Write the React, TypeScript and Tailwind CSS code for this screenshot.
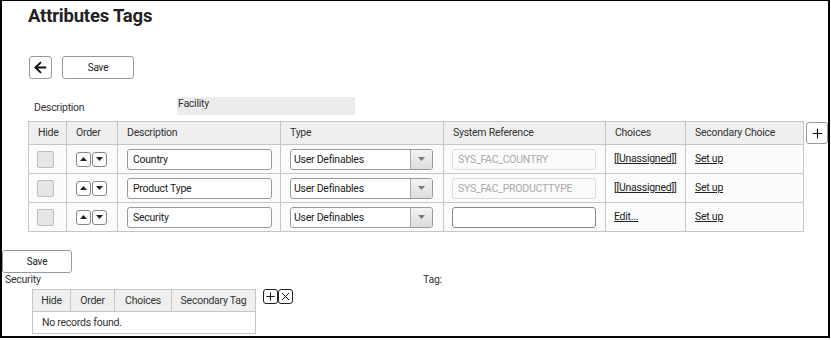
import { ArrowLeft, Plus, X } from 'lucide-react'

const rows = [
  { name: 'Country', ref: 'SYS_FAC_COUNTRY', choice: 'unassigned' },
  { name: 'Product Type', ref: 'SYS_FAC_PRODUCTTYPE', choice: 'unassigned' },
  { name: 'Security', ref: '', choice: 'edit' },
]

const headers = [
  { label: 'Hide', w: 'w-[38px]' },
  { label: 'Order', w: 'w-[51px]' },
  { label: 'Description', w: 'w-[163px]' },
  { label: 'Type', w: 'w-[163px]' },
  { label: 'System Reference', w: 'w-[162px]' },
  { label: 'Choices', w: 'w-[80px]' },
  { label: 'Secondary Choice', w: 'w-[118px]' },
]

const subHeaders = [
  { label: 'Hide', w: 'w-[38px]' },
  { label: 'Order', w: 'w-[44px]' },
  { label: 'Choices', w: 'w-[57px]' },
  { label: 'Secondary Tag', w: 'w-[84px]' },
]

const Caret = ({ up }: { up?: boolean }) => (
  <svg width="7" height="4" viewBox="0 0 7 4">
    <path d={up ? 'M0 4 L3.5 0 L7 4 Z' : 'M0 0 L7 0 L3.5 4 Z'} fill="#222" />
  </svg>
)

const App = () => {
  return (
    <div
      className="w-[830px] h-[338px] bg-white border-x-2 border-b-2 border-t border-black text-[#333] text-[10.5px] tracking-[-0.25px] overflow-hidden"
      style={{ fontFamily: 'Roboto, "Open Sans", sans-serif' }}
    >
      <h1 className="pl-[26px] pt-[2px] text-[18.5px] leading-[26px] font-bold text-[#222] tracking-[-0.2px]">Attributes Tags</h1>

      {/* toolbar */}
      <div className="flex gap-[10px] ml-[27px] mt-[27px]">
        <button className="w-[23px] h-[23px] rounded-[3px] border border-[#999] flex items-center justify-center bg-white">
          <ArrowLeft size={17} strokeWidth={2.6} color="#111" />
        </button>
        <button className="w-[72px] h-[23px] rounded-[3px] border border-[#999] bg-white text-[10px] text-[#222]">
          Save
        </button>
      </div>

      <div className="flex mt-[18px]">
        <div className="ml-[32px] w-[143px] pt-[4px] leading-[14px]">Description</div>
        <div className="w-[178px] h-[18px] bg-[#ececec] leading-[14px] px-[1px]">Facility</div>
      </div>

      {/* main grid */}
      <div className="flex items-start mt-[6px] ml-[26px]">
        <table className="border-collapse table-fixed">
          <thead>
            <tr className="bg-[#efefef] h-[23px]">
              {headers.map((h) => (
                <th
                  key={h.label}
                  className={`${h.w} border border-[#c6c6c6] text-left font-normal pl-[9px] leading-[14px] p-0`}
                >
                  {h.label}
                </th>
              ))}
            </tr>
          </thead>
          <tbody>
            {rows.map((r) => (
              <tr key={r.name} className="h-[29px] bg-[#fbfbfb]">
                <td className="border border-[#c6c6c6] pl-[8px] p-0">
                  <div className="w-[17px] h-[17px] bg-[#e6e6e6] border border-[#bdbdbd] rounded-[2px]" />
                </td>
                <td className="border border-[#c6c6c6] pl-[9px] p-0">
                  <div className="flex gap-[1px]">
                    <button className="w-[15px] h-[15px] border border-[#888] rounded-[3px] bg-white flex items-center justify-center">
                      <Caret up />
                    </button>
                    <button className="w-[15px] h-[15px] border border-[#888] rounded-[3px] bg-white flex items-center justify-center">
                      <Caret />
                    </button>
                  </div>
                </td>
                <td className="border border-[#c6c6c6] pl-[9px] p-0">
                  <div className="w-[145px] h-[21px] border border-[#999] rounded-[3px] bg-white pl-[5px] leading-[19px] text-[#222]">
                    {r.name}
                  </div>
                </td>
                <td className="border border-[#c6c6c6] pl-[9px] p-0">
                  <div className="w-[143px] h-[21px] border border-[#999] rounded-[3px] bg-white flex overflow-hidden">
                    <span className="flex-1 pl-[3px] leading-[19px] text-[#222]">User Definables</span>
                    <span className="w-[22px] h-full border-l border-[#aaa] bg-gradient-to-b from-[#f4f4f4] to-[#dcdcdc] flex items-center justify-center">
                      <svg width="7" height="4" viewBox="0 0 7 4">
                        <path d="M0 0 L7 0 L3.5 4 Z" fill="#6d7b8a" />
                      </svg>
                    </span>
                  </div>
                </td>
                <td className="border border-[#c6c6c6] pl-[8px] p-0">
                  {r.ref ? (
                    <div className="w-[144px] h-[21px] border border-[#ddd] rounded-[3px] bg-[#fbfbfb] pl-[5px] leading-[19px] text-[#aaa]">
                      {r.ref}
                    </div>
                  ) : (
                    <div className="w-[144px] h-[21px] border border-[#888] rounded-[3px] bg-white" />
                  )}
                </td>
                <td className="border border-[#c6c6c6] pl-[8px] p-0 text-[#222]">
                  {r.choice === 'unassigned' ? (
                    <span>
                      [[<span className="underline">Unassigned</span>]]
                    </span>
                  ) : (
                    <span className="underline">Edit...</span>
                  )}
                </td>
                <td className="border border-[#c6c6c6] pl-[9px] p-0 text-[#222]">
                  <span className="underline">Set up</span>
                </td>
              </tr>
            ))}
          </tbody>
        </table>
        <button className="ml-[2px] mt-[1px] w-[22px] h-[22px] rounded-[3px] border border-[#999] bg-white flex items-center justify-center">
          <Plus size={15} strokeWidth={1.8} color="#111" />
        </button>
      </div>

      <button className="mt-[18px] w-[70px] h-[23px] rounded-[3px] border border-[#999] bg-white text-[10px] text-[#222]">
        Save
      </button>

      <div className="flex leading-[14px]">
        <span className="ml-[3px] w-[418px]">Security</span>
        <span>Tag:</span>
      </div>

      <div className="flex items-start mt-[2px] ml-[30px]">
        <table className="border-collapse table-fixed">
          <thead>
            <tr className="bg-[#efefef] h-[22px]">
              {subHeaders.map((h) => (
                <th key={h.label} className={`${h.w} border border-[#c6c6c6] font-normal text-center leading-[14px] p-0`}>
                  {h.label}
                </th>
              ))}
            </tr>
          </thead>
          <tbody>
            <tr className="h-[22px] bg-white">
              <td colSpan={4} className="border border-[#c6c6c6] pl-[9px] p-0">
                No records found.
              </td>
            </tr>
          </tbody>
        </table>
        <div className="flex ml-[7px]">
          <button className="w-[15px] h-[15px] border border-[#222] rounded-[3px] bg-white flex items-center justify-center">
            <Plus size={13} strokeWidth={1.8} color="#111" />
          </button>
          <button className="w-[15px] h-[15px] border border-[#222] rounded-[3px] bg-white flex items-center justify-center">
            <X size={13} strokeWidth={1.8} color="#111" />
          </button>
        </div>
      </div>
    </div>
  )
}

export default App
